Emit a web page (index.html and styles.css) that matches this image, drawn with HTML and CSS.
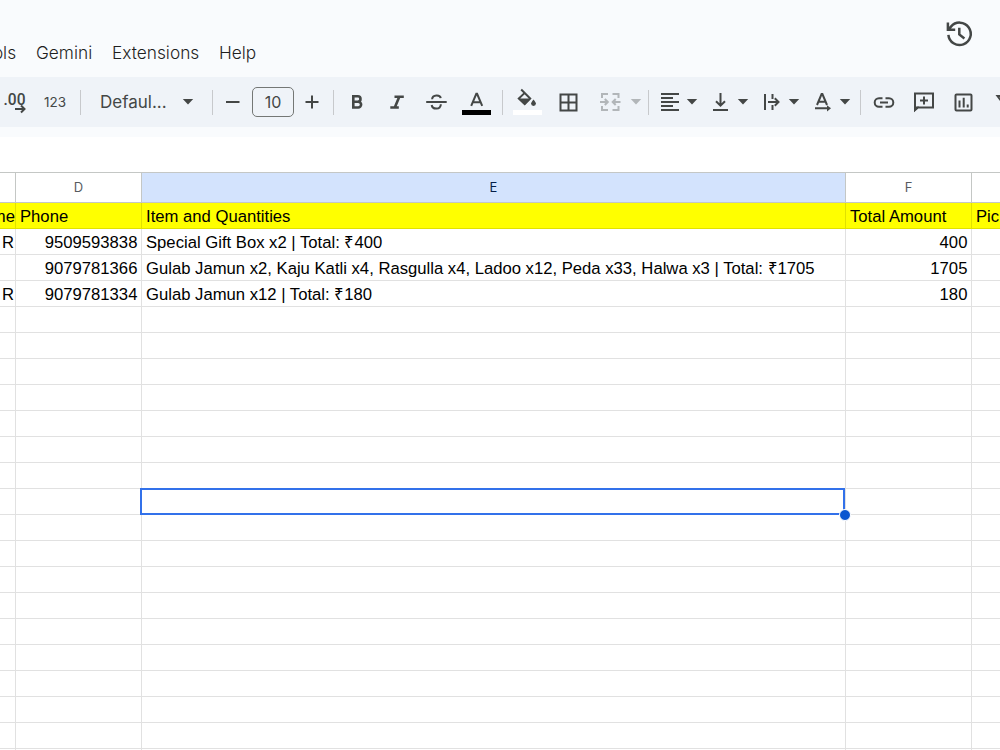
FILE: index.html
```html
<!DOCTYPE html>
<html lang="en">
<head>
    <meta charset="UTF-8">
    <meta name="viewport" content="width=device-width, initial-scale=1.0">
    <title>Orders Spreadsheet</title>
    <link rel="stylesheet" href="styles.css">
</head>
<body>
    <header class="top">
        <nav class="menu">
            <span class="menu-tools">Tools</span>
            <span class="menu-gemini">Gemini</span>
            <span class="menu-extensions">Extensions</span>
            <span class="menu-help">Help</span>
        </nav>
        <svg class="history" width="30" height="30" viewBox="0 0 30 30">
            <path d="M4.4 15.8A11.2 11.2 0 1 0 7 7.6L4.5 10.5M3.9 3.5V10.8H11.2M15.3 8.8V15.4L20.4 19.4" />
        </svg>
    </header>

    <div class="toolbar">
        <svg class="decimal" width="30" height="30" viewBox="0 0 30 30">
            <text x="3.5" y="18" textLength="22" lengthAdjust="spacingAndGlyphs">.00</text>
            <path d="M15 22H24M21 18.5L24.5 22L21 25.5" />
        </svg>
        <div class="tool number-format"><span>123</span></div>
        <div class="divider"></div>
        <div class="font-name">
            <span>Defaul...</span>
            <svg class="caret" width="12" height="6" viewBox="0 0 12 6"><path d="M0.8 0H11.2L6 5.6Z" /></svg>
        </div>
        <div class="divider"></div>
        <div class="tool minus"><svg width="30" height="30" viewBox="0 0 30 30"><path d="M8 15H21.5" /></svg></div>
        <div class="font-size">10</div>
        <div class="tool plus"><svg width="30" height="30" viewBox="0 0 30 30"><path d="M8.5 15H21.5M15 8.5V21.5" /></svg></div>
        <div class="divider"></div>
        <div class="tool bold"><svg width="30" height="30" viewBox="0 0 30 30"><path class="thick" d="M11.3 9.3H15.8A2.6 2.6 0 0 1 15.8 14.7H11.3ZM11.3 14.7H16.2A2.9 2.9 0 0 1 16.2 20.5H11.3Z" /></svg></div>
        <div class="tool"><svg width="30" height="30" viewBox="0 0 30 30"><path class="thick" d="M12.5 9.7H21.8M8.3 20.5H16.8M17.3 9.7L12.8 20.5" /></svg></div>
        <div class="tool"><svg width="30" height="30" viewBox="0 0 30 30"><path d="M4.2 15H24.7M10.1 12.2C10.4 7.4 18.3 7.4 18.7 11.2M9.7 18C10.4 23 19.2 22.7 18.8 17.3" /></svg></div>
        <div class="tool"><svg width="30" height="30" viewBox="0 0 30 30"><path d="M9.2 18.8L14.3 6.8H15.1L20.2 18.8M10.8 15.3H18.6" /><path class="black" d="M0 23H29V28H0Z" /></svg></div>
        <div class="divider after-color"></div>
        <div class="tool fill-color"><svg width="30" height="30" viewBox="0 0 30 30">
            <path d="M8.2 2.5L17.2 11.5L11.7 17L5.8 11.5L12 5.6" />
            <path class="solid" d="M5 11.5H18L11.7 18Z" />
            <path class="solid" d="M20.5 12.5C18.6 15 18.1 16 18.1 16.6A2.4 2.4 0 0 0 22.9 16.6C22.9 16 22.4 15 20.5 12.5Z" />
            <path class="white" d="M0 23H29V28H0Z" />
        </svg></div>
        <div class="tool"><svg width="30" height="30" viewBox="0 0 30 30"><path d="M7.5 7.5H23.5V23.5H7.5ZM15.5 7.5V23.5M7.5 15.5H23.5" /></svg></div>
        <div class="dropdown merge">
            <svg width="24" height="24" viewBox="0 0 24 24"><path d="M10 4H4V8M10 20H4V16M14.5 4H20.5V8M14.5 20H20.5V16M2 12H9.5M6.8 9L9.8 12L6.8 15M22.5 12H15M17.7 9L14.7 12L17.7 15" /></svg>
            <svg class="caret" width="12" height="6" viewBox="0 0 12 6"><path d="M0.8 0H11.2L6 5.6Z" /></svg>
        </div>
        <div class="divider"></div>
        <div class="dropdown align">
            <svg width="24" height="24" viewBox="0 0 24 24"><path d="M3 4H21M3 8H15M3 12H21M3 16H15M3 20H21" /></svg>
            <svg class="caret" width="12" height="6" viewBox="0 0 12 6"><path d="M0.8 0H11.2L6 5.6Z" /></svg>
        </div>
        <div class="dropdown">
            <svg width="24" height="24" viewBox="0 0 24 24"><path d="M4 20H19M11.5 3V15.5M7 11.2L11.5 15.7L16 11.2" /></svg>
            <svg class="caret" width="12" height="6" viewBox="0 0 12 6"><path d="M0.8 0H11.2L6 5.6Z" /></svg>
        </div>
        <div class="dropdown">
            <svg width="24" height="24" viewBox="0 0 24 24"><path d="M5 4V20M12.5 4V9M12.5 15V20M8 12H18M14.8 8.3L18.5 12L14.8 15.7" /></svg>
            <svg class="caret" width="12" height="6" viewBox="0 0 12 6"><path d="M0.8 0H11.2L6 5.6Z" /></svg>
        </div>
        <div class="dropdown">
            <svg width="24" height="24" viewBox="0 0 24 24"><path d="M6 15L10.6 4H11.4L16 15M7.5 11.7H14.5M4 18.3H18" /><path class="solid" d="M16 15.2L20 18.3L16 21.4Z" /></svg>
            <svg class="caret" width="12" height="6" viewBox="0 0 12 6"><path d="M0.8 0H11.2L6 5.6Z" /></svg>
        </div>
        <div class="divider after-rotate"></div>
        <div class="tool link"><svg width="30" height="30" viewBox="0 0 30 30"><path d="M13.5 11.2H10A4.3 4.3 0 0 0 10 19.8H13.5M16.5 11.2H20A4.3 4.3 0 0 1 20 19.8H16.5M11 15.5H19" /></svg></div>
        <div class="tool"><svg width="30" height="30" viewBox="0 0 30 30"><path d="M6 6.5H24V20.5H9L6 23ZM15 9.5V17.5M11 13.5H19" /><path class="solid" d="M5 19.5H10L5 25Z" /></svg></div>
        <div class="tool"><svg width="30" height="30" viewBox="0 0 30 30"><path d="M7.5 7.5H21.5A1 1 0 0 1 22.5 8.5V22.5A1 1 0 0 1 21.5 23.5H7.5A1 1 0 0 1 6.5 22.5V8.5A1 1 0 0 1 7.5 7.5ZM10.5 13.5V20.5M14.7 10.8V20.5M18.7 17.5V20.5" /></svg></div>
        <div class="tool filter"><svg width="30" height="30" viewBox="0 0 30 30"><path d="M8.5 9H24.5L18.5 17V25H14.5V17Z" /></svg></div>
    </div>

    <div class="formula-gap"></div>

    <div class="sheet">
        <table>
            <colgroup>
                <col class="col-c"><col class="col-d"><col class="col-e"><col class="col-f"><col class="col-g">
            </colgroup>
            <thead>
                <tr><th></th><th>D</th><th class="active">E</th><th>F</th><th></th></tr>
            </thead>
            <tbody id="rows"></tbody>
        </table>
    </div>

    <script>
        const data = [
            ['Name', 'Phone', 'Item and Quantities', 'Total Amount', 'Pickup'],
            ['R', '9509593838', 'Special Gift Box x2 | Total: ₹400', '400', ''],
            ['', '9079781366', 'Gulab Jamun x2, Kaju Katli x4, Rasgulla x4, Ladoo x12, Peda x33, Halwa x3 | Total: ₹1705', '1705', ''],
            ['R', '9079781334', 'Gulab Jamun x12 | Total: ₹180', '180', '']
        ];
        const selectedRow = 11;
        const rows = document.getElementById('rows');

        for (let r = 0; r < 22; r++) {
            const tr = document.createElement('tr');
            if (r === 0) tr.className = 'titles';

            for (let c = 0; c < 5; c++) {
                const td = document.createElement('td');
                const text = data[r] ? data[r][c] : '';
                if (c === 0) {
                    td.className = 'cut';
                } else if (/^\d+$/.test(text)) {
                    td.className = 'number';
                }
                if (text) td.innerHTML = `<span>${text}</span>`;
                if (r === selectedRow && c === 2) {
                    td.className = 'selected';
                    td.innerHTML = '<div class="selection"><i class="handle"></i></div>';
                }
                tr.appendChild(td);
            }
            rows.appendChild(tr);
        }
    </script>
</body>
</html>
```
FILE: styles.css
```css
* {
    box-sizing: border-box;
}

body {
    margin: 0;
    width: 1000px;
    height: 750px;
    overflow: hidden;
    background-color: #fff;
    font-family: "Liberation Sans", Arial, sans-serif;
}

.top {
    display: flex;
    justify-content: space-between;
    height: 77px;
    padding-right: 26px;
    background-color: #f9fbfd;
}

.menu {
    display: flex;
    gap: 20px;
    padding-top: 42px;
    margin-left: -27px;
    font-family: Inter, Roboto, sans-serif;
    font-size: 17.3px;
    font-weight: 300;
    line-height: 22px;
    color: #1f1f1f;
}

.menu span {
    white-space: nowrap;
}

.menu-tools {
    width: 43px;
    text-align: right;
}

.menu-gemini {
    width: 56px;
}

.menu-extensions {
    width: 87px;
}

svg {
    display: block;
    flex: none;
    fill: none;
    stroke: #444746;
    stroke-width: 2;
}

.history {
    margin-top: 19px;
    stroke-width: 2.5;
}

.toolbar {
    display: flex;
    align-items: center;
    height: 50px;
    overflow: hidden;
    background-color: #eff3f8;
    font-family: Inter, Roboto, sans-serif;
    color: #444746;
}

.toolbar .caret,
.solid {
    fill: #444746;
    stroke: none;
}

.thick {
    stroke-width: 2.6;
}

.black {
    fill: #000;
    stroke: none;
}

.white {
    fill: #fff;
    stroke: none;
}

.decimal text {
    font-family: Roboto, sans-serif;
    font-size: 17px;
    font-weight: 500;
    fill: #444746;
    stroke: none;
}

.tool {
    display: flex;
    flex: none;
    align-items: center;
    justify-content: center;
    width: 40px;
}

.number-format {
    width: 50px;
    font-size: 13.5px;
}

.divider {
    flex: none;
    width: 1px;
    height: 25px;
    background-color: #c7c9cc;
}

.font-name {
    display: flex;
    flex: none;
    align-items: center;
    justify-content: space-between;
    width: 131px;
    padding: 0 18px 0 19px;
    font-size: 17px;
}

.minus {
    width: 39px;
}

.font-size {
    flex: none;
    width: 42px;
    height: 30px;
    border: 1px solid #747775;
    border-radius: 5px;
    text-align: center;
    font-size: 16px;
    line-height: 28px;
}

.plus {
    width: 39px;
    padding-right: 3px;
}

.bold {
    margin-left: 3px;
}

.after-color {
    margin-left: 5px;
}

.fill-color {
    margin-left: 5px;
}

.dropdown {
    display: flex;
    flex: none;
    align-items: center;
    gap: 4px;
    width: 51px;
}

.merge {
    gap: 8px;
    width: 60px;
    padding-left: 10px;
    opacity: 0.35;
}

.align {
    width: 60px;
    padding-left: 9px;
}

.after-rotate {
    margin-left: -2px;
}

.link {
    margin-left: 3px;
}

.formula-gap {
    height: 45px;
    border-top: 10px solid #f9fbfd;
    background-color: #fff;
}

.sheet {
    border-top: 1px solid #c4c7c5;
}

table {
    width: 1000px;
    table-layout: fixed;
    border-collapse: separate;
    border-spacing: 0;
}

.col-c {
    width: 16px;
}

.col-d,
.col-f {
    width: 126px;
}

.col-e {
    width: 704px;
}

.col-g {
    width: 28px;
}

th {
    height: 30px;
    padding: 0 0 1px;
    border-right: 1px solid #c4c7c5;
    border-bottom: 1px solid #c4c7c5;
    font-family: Inter, Roboto, sans-serif;
    font-size: 13px;
    font-weight: 400;
    color: #575b5f;
}

th.active {
    background-color: #d3e3fd;
    color: #041e49;
}

th:last-child,
td:last-child {
    border-right: none;
}

td {
    height: 26px;
    padding: 2px 4px 0 4px;
    border-right: 1px solid #e1e1e1;
    border-bottom: 1px solid #e1e1e1;
    overflow: hidden;
    white-space: nowrap;
    font-size: 16.67px;
    line-height: 20px;
    color: #000;
}

.titles td {
    background-color: #ff0;
    border-color: #e1e100;
}

td.number {
    padding-right: 3.6px;
    text-align: right;
}

td.cut {
    padding: 2px 1px 0 0;
}

.titles td.cut {
    padding-right: 0;
}

/* long values in the first column are clipped on their left side */
td.cut span {
    display: flex;
    justify-content: flex-end;
}

td.selected {
    position: relative;
    overflow: visible;
}

.selection {
    position: absolute;
    top: -1px;
    left: -2px;
    width: 705px;
    height: 27px;
    border: 2px solid #3271ea;
}

.handle {
    position: absolute;
    right: -8px;
    bottom: -8px;
    width: 12px;
    height: 12px;
    border: 1px solid #fff;
    border-radius: 50%;
    background-color: #0b57d0;
}
```
